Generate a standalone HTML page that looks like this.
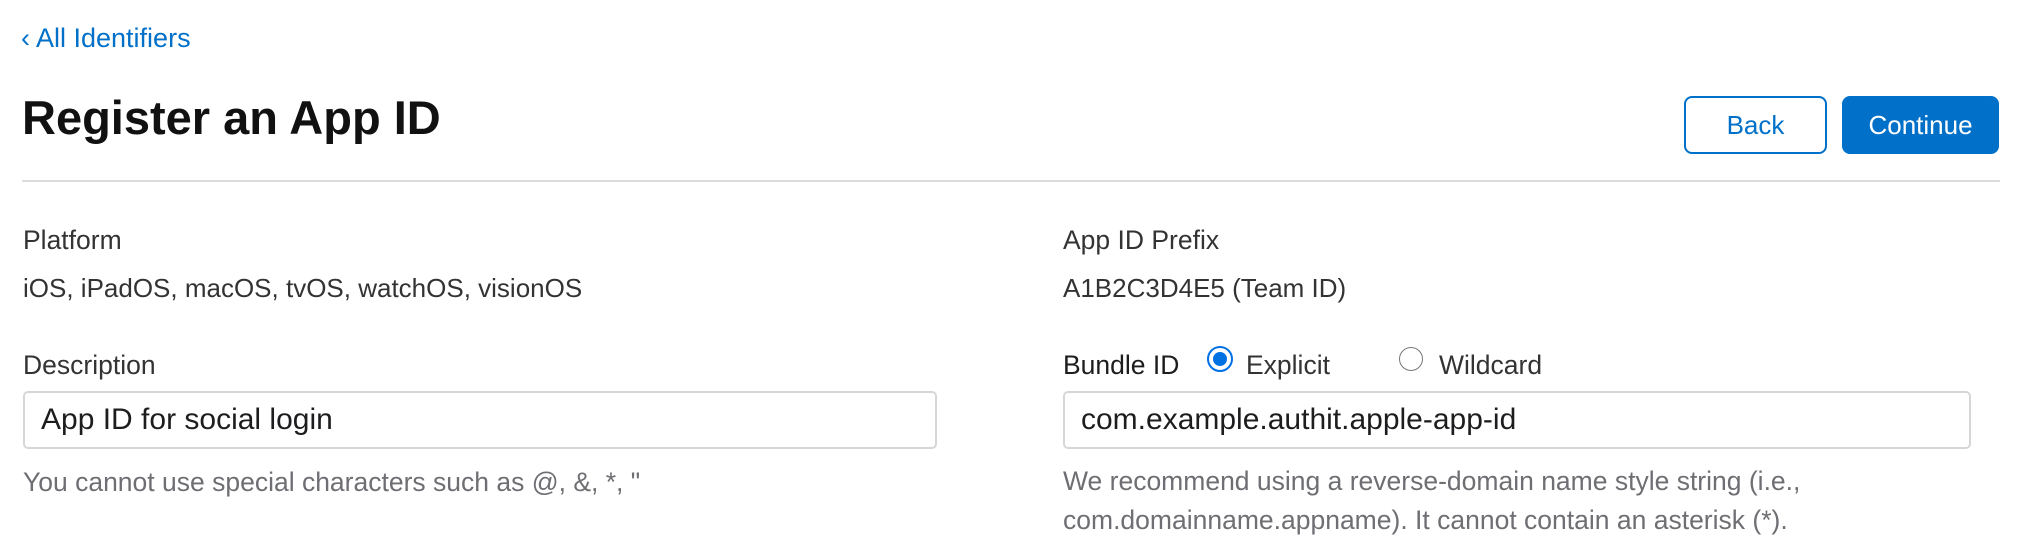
<!DOCTYPE html>
<html><head><style>
body{margin:0;width:2026px;height:554px;background:#fff;font-family:"Liberation Sans",sans-serif;color:#1d1d1f;position:relative;overflow:hidden}
.a{position:absolute;white-space:nowrap}
.lbl{font-size:26.5px;color:#333;}
.val{font-size:26px;color:#333;}
.hint{font-size:26.5px;color:#6e6e73}
.inp{position:absolute;border:2px solid #d6d6d6;border-radius:5px;box-sizing:border-box;height:58px;font-size:30px;color:#1d1d1f;line-height:54px;padding-left:16px}
.btn{position:absolute;top:96px;height:58px;box-sizing:border-box;border-radius:8px;font-size:26px;text-align:center;line-height:54px}
</style></head><body>
<div class="a" style="left:21px;top:23px;font-size:27px;color:#0070c9">‹ All Identifiers</div>
<div class="a" style="left:22px;top:90px;font-size:47px;font-weight:bold;color:#111">Register an App ID</div>
<div class="btn" style="left:1684px;width:143px;border:2px solid #0070c9;color:#0070c9">Back</div>
<div class="btn" style="left:1842px;width:157px;background:#0070c9;color:#fff;border:2px solid #0070c9">Continue</div>
<div class="a" style="left:22px;top:180px;width:1978px;height:2px;background:#dcdcdc"></div>

<div class="a lbl" style="left:23px;top:225px">Platform</div>
<div class="a val" style="left:23px;top:273px">iOS, iPadOS, macOS, tvOS, watchOS, visionOS</div>
<div class="a lbl" style="left:23px;top:350px">Description</div>
<div class="inp" style="left:23px;top:391px;width:914px">App ID for social login</div>
<div class="a hint" style="left:23px;top:467px">You cannot use special characters such as @, &amp;, *, "</div>

<div class="a lbl" style="left:1063px;top:225px">App ID Prefix</div>
<div class="a val" style="left:1063px;top:273px">A1B2C3D4E5 (Team ID)</div>
<div class="a lbl" style="left:1063px;top:350px;color:#1d1d1f">Bundle ID</div>
<div class="a" style="left:1207px;top:346px;width:26px;height:26px;border-radius:50%;border:2.5px solid #0071e3;box-sizing:border-box;background:#fff"><div style="position:absolute;left:3.5px;top:3.5px;width:14px;height:14px;border-radius:50%;background:#0071e3"></div></div>
<div class="a lbl" style="left:1246px;top:350px">Explicit</div>
<div class="a" style="left:1399px;top:347px;width:24px;height:24px;border-radius:50%;border:1.5px solid #777;box-sizing:border-box"></div>
<div class="a lbl" style="left:1439px;top:350px">Wildcard</div>
<div class="inp" style="left:1063px;top:391px;width:908px">com.example.authit.apple-app-id</div>
<div class="a hint" style="left:1063px;top:466px">We recommend using a reverse-domain name style string (i.e.,</div>
<div class="a hint" style="left:1063px;top:505px">com.domainname.appname). It cannot contain an asterisk (*).</div>
</body></html>
